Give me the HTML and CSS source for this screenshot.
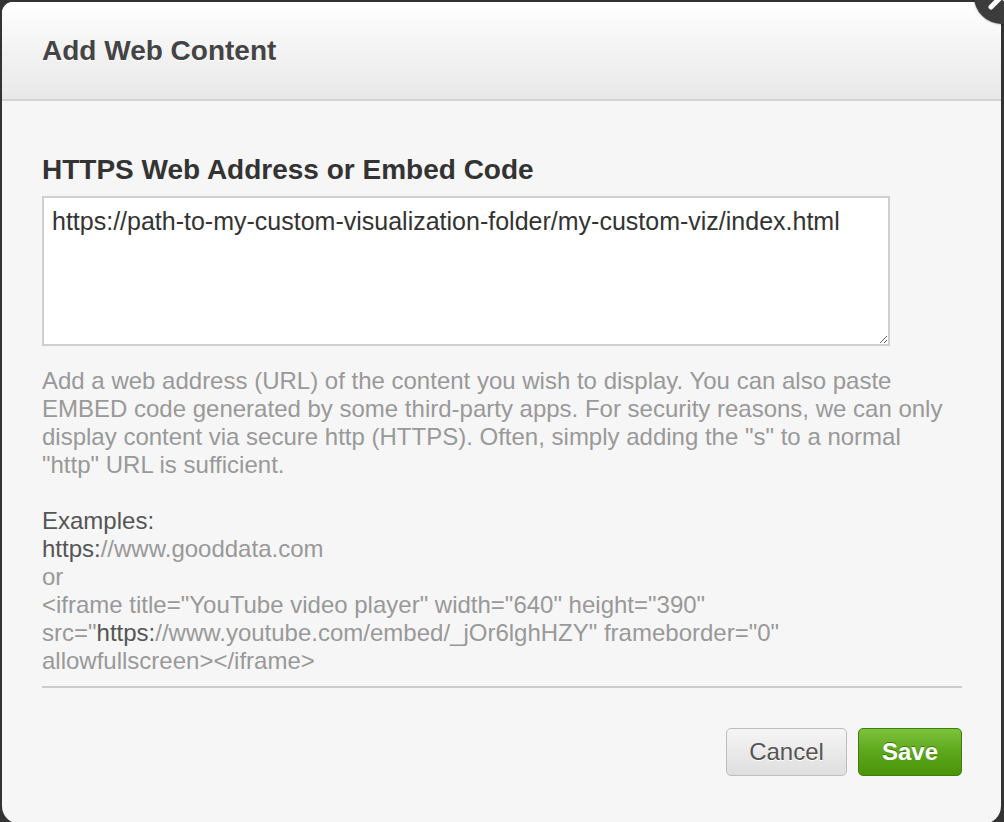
FILE: index.html
```html
<!DOCTYPE html>
<html>
<head>
<meta charset="utf-8">
<title>Add Web Content</title>
<link rel="stylesheet" href="styles.css">
</head>
<body>
<div class="dialog">
  <div class="header">
    <h1 class="title">Add Web Content</h1>
  </div>
  <div class="content">
    <label class="label" for="url">HTTPS Web Address or Embed Code</label>
    <textarea id="url" class="field" readonly>https://path-to-my-custom-visualization-folder/my-custom-viz/index.html</textarea>
    <p class="help">Add a web address (URL) of the content you wish to display. You can also paste<br>EMBED code generated by some third-party apps. For security reasons, we can only<br>display content via secure http (HTTPS). Often, simply adding the "s" to a normal<br>"http" URL is sufficient.<br><br><span class="dark">Examples:</span><br><span class="dark">https:</span>//www.gooddata.com<br>or<br>&lt;iframe title="YouTube video player" width="640" height="390"<br>src="<span class="dark">https:</span>//www.youtube.com/embed/_jOr6lghHZY" frameborder="0"<br>allowfullscreen&gt;&lt;/iframe&gt;</p>
    <div class="separator"></div>
    <div class="actions">
      <button class="btn btn-cancel">Cancel</button>
      <button class="btn btn-save">Save</button>
    </div>
  </div>
</div>
<div class="close" aria-label="Close">
  <svg class="close-x" width="56" height="56" viewBox="0 0 56 56">
    <path d="M17 17 L39 39 M39 17 L17 39" stroke="#ffffff" stroke-width="5" stroke-linecap="round" fill="none"/>
  </svg>
</div>
</body>
</html>
```
FILE: styles.css
```css
html, body {
  margin: 0;
  padding: 0;
}
body {
  background: #333333;
  width: 1004px;
  height: 822px;
  overflow: hidden;
  position: relative;
  font-family: "Liberation Sans", Arial, Helvetica, sans-serif;
}
.dialog {
  margin: 2px 3px 0 2px;
  height: 822px;
  background: #f6f6f6;
  border-radius: 11px 11px 18px 18px;
  overflow: hidden;
}
.header {
  height: 97px;
  border-bottom: 2px solid #d3d3d3;
  background: linear-gradient(to bottom, #ffffff 0%, #f3f3f3 50%, #e8e8e8 100%);
  display: flex;
  align-items: center;
  padding-left: 40px;
}
.title {
  margin: 0;
  font-size: 28px;
  font-weight: bold;
  color: #444444;
  text-shadow: 0 1px 0 #ffffff;
  line-height: 34px;
}
.content {
  padding: 52px 39px 0 40px;
  display: flex;
  flex-direction: column;
}
.label {
  font-size: 28px;
  font-weight: bold;
  color: #333333;
  line-height: 34px;
  margin-bottom: 9px;
}
.field {
  box-sizing: border-box;
  width: 848px;
  height: 150px;
  border: 2px solid #cfcfcf;
  background: #ffffff;
  padding: 9px 8px;
  margin: 0;
  font-family: "Liberation Sans", Arial, Helvetica, sans-serif;
  font-size: 25px;
  line-height: 28px;
  color: #333333;
  resize: both;
  outline: none;
  border-radius: 0;
  overflow: hidden;
}
.help {
  margin: 21px 0 0;
  font-size: 24px;
  line-height: 28px;
  color: #999999;
  white-space: nowrap;
}
.dark {
  color: #555555;
}
.separator {
  margin-top: 11px;
  height: 2px;
  background: #cccccc;
}
.actions {
  margin-top: 40px;
  display: flex;
  justify-content: flex-end;
  gap: 11px;
}
.btn {
  box-sizing: border-box;
  height: 48px;
  border-radius: 5px;
  font-family: "Liberation Sans", Arial, Helvetica, sans-serif;
  font-size: 24px;
  padding: 0;
  cursor: pointer;
}
.btn-cancel {
  width: 121px;
  border: 1px solid #bdbdbd;
  background: linear-gradient(to bottom, #f5f5f5 0%, #dedede 100%);
  color: #555555;
  text-shadow: 0 1px 0 #ffffff;
}
.btn-save {
  width: 104px;
  border: 1px solid #3f7c0c;
  background: linear-gradient(to bottom, #7cc23b 0%, #5aa51a 55%, #4a9409 100%);
  color: #ffffff;
  font-weight: bold;
  text-shadow: 0 -1px 0 #3d7a0a;
}
.close {
  position: absolute;
  top: -32px;
  right: -26px;
  width: 56px;
  height: 56px;
  border-radius: 50%;
  background: #3c3c3c;
  box-shadow: 0 0 2px rgba(0,0,0,0.6);
}
.close-x {
  display: block;
}
```
